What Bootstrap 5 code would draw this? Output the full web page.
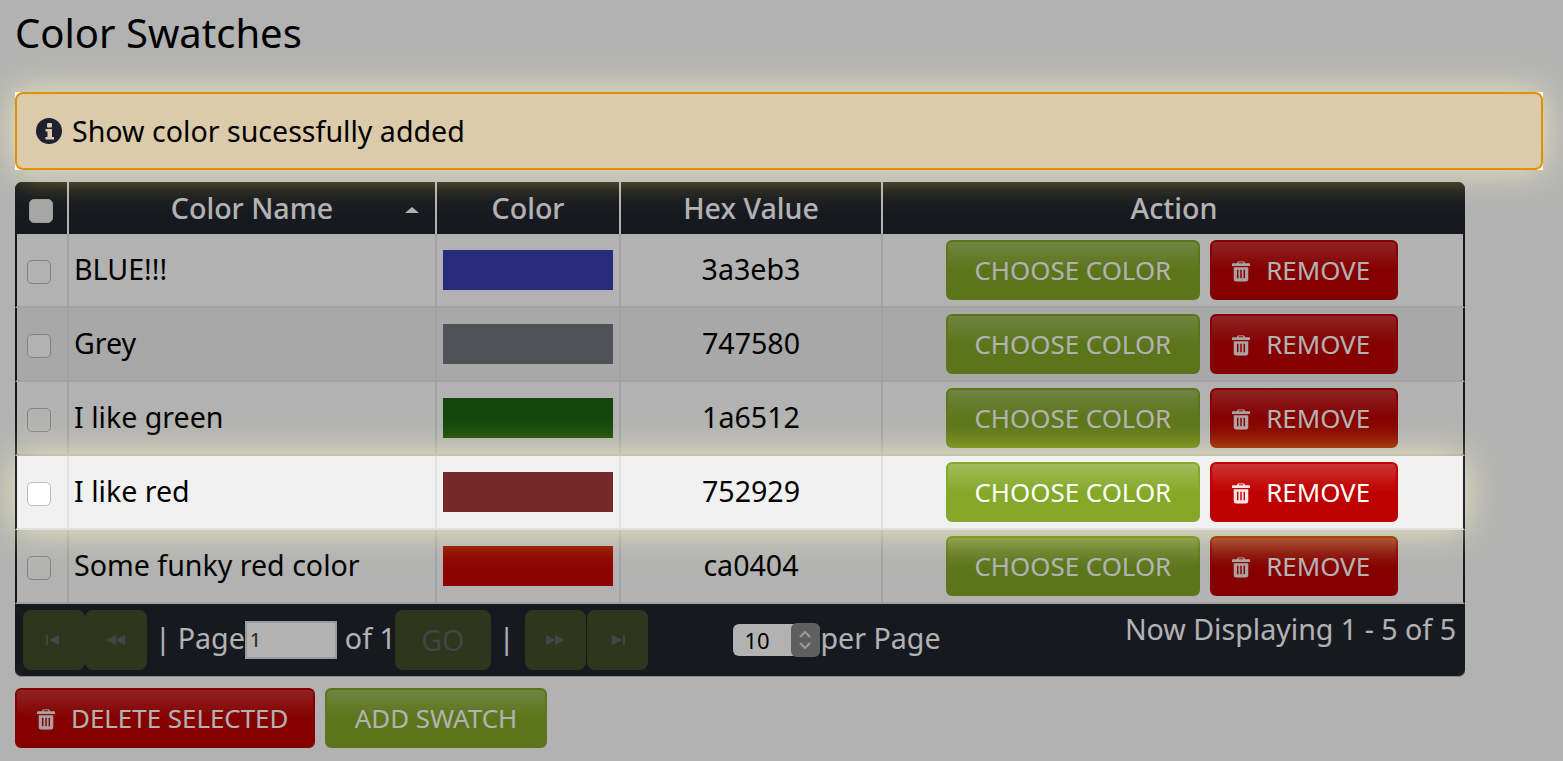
<!DOCTYPE html>
<html lang="en">
<head>
<meta charset="utf-8">
<title>Color Swatches</title>
<link rel="stylesheet" href="https://cdn.jsdelivr.net/npm/bootstrap@5.3.0/dist/css/bootstrap.min.css">
<style>
html,body{height:100%}
body{background:#fff;color:#000;font-family:"Noto Sans","Open Sans",sans-serif;font-size:28.6px;overflow:hidden}
.page-mask{position:fixed;inset:0;background:rgba(0,0,0,.3);z-index:10}
.page-wrap{padding:0 20px 0 15px}
.page-title{font-size:40px;font-weight:400;line-height:50px;margin:8px 0 34px;color:#000}
.notice-slot{position:relative;margin-bottom:12px}
.halo{position:absolute;z-index:15;box-shadow:0 0 36px rgba(255,255,60,.75);mix-blend-mode:screen;pointer-events:none}
.notice-slot .halo{inset:0}
.swatch-panel>.halo{left:0;right:0;top:274px;height:74px}
.glow-box{position:relative;z-index:20;background:#fff}
.notice{background:#dbcbaa;border:2px solid #e09000;border-radius:8px;height:78px;display:flex;align-items:center;padding:0 19px;gap:10px;color:#000}
.notice svg{width:26px;height:26px;flex:none}
.swatch-panel{position:relative;width:1450px;background:#22252f;border-radius:7px;color:#fff}
.swatch-table{width:1450px;table-layout:fixed;border-collapse:separate;border-spacing:0;margin:0;--bs-table-bg:transparent;--bs-table-color:#000}
.swatch-table th{height:52px;padding:0;background:#22252f;color:#fff;font-weight:500;text-align:center;border-right:2px solid #fff;border-bottom:0;vertical-align:middle;box-shadow:none;position:relative}
.swatch-table th:first-child{border-top-left-radius:7px}
.swatch-table th:last-child{border-right:0;border-top-right-radius:7px}
.swatch-table td{height:74px;padding:0 6px;background:#fff;border-right:2px solid #e8e8e8;border-bottom:2px solid #e8e8e8;vertical-align:middle;box-shadow:none;color:#000}
.swatch-table td:first-child{border-left:2px solid #22252f;text-align:center}
.swatch-table td:last-child{border-right:2px solid #22252f;text-align:center;padding-right:8px}
.swatch-table tr.alt td{background:#f1f1f1}
.swatch-table tr.lit{position:relative;z-index:20}
.swatch-table tr.lit td{border-color:#e0e0e0}
.swatch-table tr.lit td:first-child{border-left-color:#22252f}
.swatch-table tr.lit td:last-child{border-right-color:#22252f}
.swatch-table td.name-cell{padding:0 5px 2px}
.swatch-table td.hex-cell{text-align:center;padding-bottom:2px}
.tick{display:inline-block;width:24px;height:24px;background:#fff;border:1px solid #bbb;border-radius:5px;vertical-align:middle;margin:-2px 0 0 -6px}
th .tick{border-color:#ddd;background:#eee;margin:0}
.chip{display:block;height:40px;width:170px}
.sort-mark{position:absolute;right:16px;top:25px;width:0;height:0;border:7px solid transparent;border-top:0;border-bottom:6px solid #fff}
.act{font-size:25.9px;line-height:34px;height:60px;border-radius:6px;border:2px solid;color:#fff;padding:0 26.5px;display:inline-flex;align-items:center;justify-content:center;margin:0;white-space:nowrap;vertical-align:top}
.act-green{background:linear-gradient(#a0bd5c,#85a828 50%);border-color:#85a828}
.act-red{background:linear-gradient(#cc3434,#bf0000 50%);border-color:#bf0000;padding:0 26px 0 20px;gap:16px}
.act-red svg{width:18px;height:21px;flex:none;margin-top:2px;opacity:.9}
td .act+.act{margin-left:3px}
.pager-bar{height:73px;background:#22252f;border-radius:0 0 7px 7px;display:flex;align-items:center;padding:0 9px 0 8px;color:#fff;position:relative;border-bottom:1px solid #ccc}
.pg{width:61px;height:60px;background:#434f2b;border-radius:8px;display:flex;align-items:center;justify-content:center;flex:none}
.pg svg{width:22px;height:14px;fill:#5e6468}
.pg-first{width:62px}
.pg-wide{width:96px;color:#5e6468;margin-left:-1px}
.pg-text{margin-top:-4px}
.pg-sep{margin:-4px 0 0 8px}
.pg-page{margin:-4px 0 0 7px}
.pg-input{width:92px;height:38px;background:#fff;border:2px solid #ddd;color:#333;font-size:20px;padding:2px 3px;line-height:30px;margin-top:-1px}
.pg-next{margin-left:10px}
.pg-last{margin-left:1px}
.per-box{margin-left:85px;display:flex;align-items:center;height:32px;width:87px;border-radius:6px;background:#fff;color:#000;font-size:22px}
.per-box span{flex:1;padding-left:12px}
.per-spin{width:29px;height:34px;background:#888;border-radius:6px;display:flex;align-items:center;justify-content:center}
.per-spin svg{width:14px;height:26px;fill:none;stroke:#ddd;stroke-width:2}
.per-label{margin:-4px 0 0 1px}
.now-shown{position:absolute;right:9px;top:3px;line-height:44px}
.foot-actions{display:flex;gap:10px;margin-top:11px}
.act-delete{width:300px;justify-content:flex-start;padding-right:0}
.act-add{width:222px;padding:0}
</style>
</head>
<body>
<div class="page-mask"></div>
<div class="page-wrap">
  <h1 class="page-title">Color Swatches</h1>
  <div class="notice-slot">
    <div class="halo"></div>
    <div class="glow-box rounded-0">
      <div class="notice">
        <svg viewBox="0 0 26 26"><circle cx="13" cy="13" r="13" fill="#1d2130"/><rect x="11" y="5" width="5" height="4.5" rx="1" fill="#dbcbaa"/><path d="M9.5 11h6.5v8h2v2.500H9.500V19h2v-5.500h-2z" fill="#dbcbaa"/></svg>
        <span>Show color sucessfully added</span>
      </div>
    </div>
  </div>
  <div class="swatch-panel">
    <table class="table swatch-table">
      <colgroup><col style="width:54px"><col style="width:368px"><col style="width:184px"><col style="width:262px"><col></colgroup>
      <thead>
        <tr><th><span class="tick"></span></th><th>Color Name<span class="sort-mark"></span></th><th>Color</th><th>Hex Value</th><th>Action</th></tr>
      </thead>
      <tbody>
        <tr><td><span class="tick"></span></td><td class="name-cell">BLUE!!!</td><td><span class="chip" style="background:#3a3eb3"></span></td><td class="hex-cell">3a3eb3</td>
          <td><a class="btn act act-green">CHOOSE COLOR</a> <a class="btn act act-red"><svg viewBox="0 0 21 24"><use href="#bin"/></svg>REMOVE</a></td></tr>
        <tr class="alt"><td><span class="tick"></span></td><td class="name-cell">Grey</td><td><span class="chip" style="background:#747580"></span></td><td class="hex-cell">747580</td>
          <td><a class="btn act act-green">CHOOSE COLOR</a> <a class="btn act act-red"><svg viewBox="0 0 21 24"><use href="#bin"/></svg>REMOVE</a></td></tr>
        <tr><td><span class="tick"></span></td><td class="name-cell">I like green</td><td><span class="chip" style="background:#1a6512"></span></td><td class="hex-cell">1a6512</td>
          <td><a class="btn act act-green">CHOOSE COLOR</a> <a class="btn act act-red"><svg viewBox="0 0 21 24"><use href="#bin"/></svg>REMOVE</a></td></tr>
        <tr class="alt lit"><td><span class="tick"></span></td><td class="name-cell">I like red</td><td><span class="chip" style="background:#752929"></span></td><td class="hex-cell">752929</td>
          <td><a class="btn act act-green">CHOOSE COLOR</a> <a class="btn act act-red"><svg viewBox="0 0 21 24"><use href="#bin"/></svg>REMOVE</a></td></tr>
        <tr><td><span class="tick"></span></td><td class="name-cell">Some funky red color</td><td><span class="chip" style="background:#ca0404"></span></td><td class="hex-cell">ca0404</td>
          <td><a class="btn act act-green">CHOOSE COLOR</a> <a class="btn act act-red"><svg viewBox="0 0 21 24"><use href="#bin"/></svg>REMOVE</a></td></tr>
      </tbody>
    </table>
    <div class="halo"></div>
    <div class="pager-bar">
      <div class="pg pg-first"><svg viewBox="0 0 22 14"><path d="M3 2h2v10H3zM6 7l10-5v10z"/></svg></div>
      <div class="pg pg-first"><svg viewBox="0 0 22 14"><path d="M1 7l10-5v10zM10 7l10-5v10z"/></svg></div>
      <span class="pg-sep">|</span><span class="pg-page">Page</span>
      <div class="pg-input">1</div>
      <span class="pg-text ms-2">of 1</span>
      <div class="pg pg-wide">GO</div>
      <span class="pg-sep">|</span>
      <div class="pg pg-next"><svg viewBox="0 0 22 14"><path d="M2 2l10 5-10 5zM11 2l10 5-10 5z"/></svg></div>
      <div class="pg pg-last"><svg viewBox="0 0 22 14"><path d="M6 2l10 5-10 5zM17 2h2v10h-2z"/></svg></div>
      <div class="per-box"><span>10</span><div class="per-spin"><svg viewBox="0 0 14 26"><path d="M2 10l5-5 5 5M2 16l5 5 5-5"/></svg></div></div>
      <span class="per-label">per Page</span>
      <span class="now-shown">Now Displaying 1 - 5 of 5</span>
    </div>
  </div>
  <div class="foot-actions">
    <a class="btn act act-red act-delete">
      <svg viewBox="0 0 21 24"><use href="#bin"/></svg>DELETE SELECTED</a>
    <a class="btn act act-green act-add">ADD SWATCH</a>
  </div>
</div>
<svg width="0" height="0" class="position-absolute"><defs>
  <symbol id="bin" viewBox="0 0 21 24"><path fill="#fff" fill-rule="evenodd" d="M7 0h7l1.500 2.500H20a1 1 0 0 1 1 1V5.500H0V3.500a1 1 0 0 1 1-1h4.500zM8 1.200L7.500 2.500h6L13 1.200zM2 7h17v13.500a3.500 3.500 0 0 1-3.500 3.500h-10A3.500 3.500 0 0 1 2 20.500zM5.800 10v10h1.700V10zM9.700 10v10h1.700V10zM13.500 10v10h1.700V10z"/></symbol>
</defs></svg>
<script src="https://cdn.jsdelivr.net/npm/bootstrap@5.3.0/dist/js/bootstrap.bundle.min.js"></script>
</body>
</html>
